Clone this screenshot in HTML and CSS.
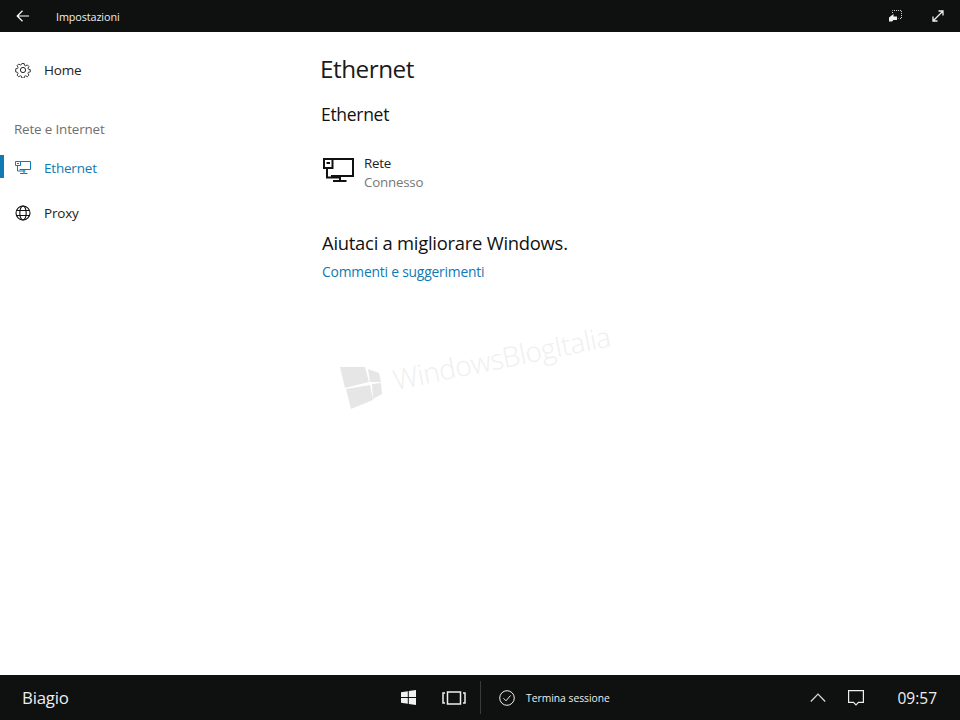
FILE: index.html
```html
<!DOCTYPE html>
<html lang="it">
<head>
<meta charset="utf-8">
<title>Impostazioni</title>
<link rel="stylesheet" href="styles.css">
</head>
<body>
<div class="screen">
  <header class="titlebar">
    <div class="titlebar-left">
      <svg class="back-icon" width="14" height="12" viewBox="0 0 14 12"><path d="M6.500 .8 1.200 6l5.300 5.200M1.200 6H13" fill="none" stroke="#fff" stroke-width="1.200"/></svg>
      <span class="app-title">Impostazioni</span>
    </div>
    <div class="titlebar-right">
      <svg width="13" height="12" viewBox="0 0 13 12"><path d="M3.500 3V.5h9v8h-3" fill="none" stroke="#ccc" stroke-dasharray="1 1"/><path d="M0 11.500V7.500L4.500 4v2.500H8V10H4.500L3 11.500z" fill="#eee"/></svg>
      <svg width="12" height="12" viewBox="0 0 12 12"><path d="M1.500 10.500 10.500 1.500M6.500 1h4.500v4.500M1 6.500V11h4.500" fill="none" stroke="#eee" stroke-width="1.300"/></svg>
    </div>
  </header>

  <main class="main">
    <nav class="sidebar">
      <a class="nav-item home">
        <svg class="nav-icon" width="16" height="16" viewBox="0 0 16 16"><circle cx="8" cy="8" r="2.600" fill="none" stroke="#222" stroke-width="1"/><path d="M6.700 .8h2.600l.4 2 1.300.6 1.800-1.100 1.800 1.800-1.100 1.800.6 1.300 2 .4v2.600l-2 .4-.6 1.300 1.100 1.800-1.800 1.800-1.800-1.100-1.300.6-.4 2H6.700l-.4-2-1.300-.6-1.800 1.100-1.800-1.800 1.100-1.800-.6-1.300-2-.4V6.700l2-.4.600-1.300-1.100-1.800 1.800-1.800 1.800 1.100 1.300-.6z" transform="translate(.8 .8) scale(.9)" fill="none" stroke="#222" stroke-width="1"/></svg>
        <span>Home</span>
      </a>
      <div class="nav-heading">Rete e Internet</div>
      <a class="nav-item active">
        <svg class="nav-icon" width="16" height="13" viewBox="0 0 16 13"><path d="M5.500 .5h10v8H4.500M.5.500h5v4h-5zM2.500 4.500v5.500h8M9 8.500v3.500M5 12.500h7.500M2 2.500h2" fill="none" stroke="#0f7ab3" stroke-width="1"/></svg>
        <span>Ethernet</span>
      </a>
      <a class="nav-item">
        <svg class="nav-icon" width="16" height="16" viewBox="0 0 16 16"><g fill="none" stroke="#111" stroke-width="1.100"><circle cx="8" cy="8" r="7"/><ellipse cx="8" cy="8" rx="3.200" ry="7"/><path d="M1.500 5.500h13M1.500 10.500h13"/></g></svg>
        <span>Proxy</span>
      </a>
    </nav>

    <section class="content">
      <h1 class="page-title">Ethernet</h1>
      <h2 class="section-title">Ethernet</h2>
      <div class="network">
        <svg class="network-icon" width="33" height="25" viewBox="0 0 33 25"><path d="M10 2h21v17H9M2 2h8.500v9H2zM5 11v9.500h13.500M18 19v5M11 24h13.500M4.500 6h3.500" fill="none" stroke="#111" stroke-width="2"/></svg>
        <div class="network-text">
          <div class="network-name">Rete</div>
          <div class="network-status">Connesso</div>
        </div>
      </div>
      <h3 class="help-title">Aiutaci a migliorare Windows.</h3>
      <a class="help-link">Commenti e suggerimenti</a>
    </section>

    <div class="watermark">
      <svg class="watermark-logo" width="42" height="45" viewBox="0 0 42 45"><path d="M0 2H25L29 17 5 23zM28 4 39 8 41 17H30zM6 24 30 20 33 35 11 44zM32 19 41 18 42 29 33 34z" fill="#e6e6e6"/></svg>
      <span class="watermark-text">WindowsBlogItalia</span>
    </div>
  </main>

  <footer class="taskbar">
    <span class="user">Biagio</span>
    <div class="task-center">
      <svg class="win-icon" width="15" height="15" viewBox="0 0 15 15"><path d="M0 2.200 6.800 1.200V7H0zM7.800 1 15 0V7H7.800zM0 8H6.800V13.800L0 12.800zM7.800 8H15V15L7.800 14z" fill="#f2f2f2"/></svg>
      <svg class="view-icon" width="24" height="14" viewBox="0 0 24 14"><path d="M5.500 1h13v12h-13zM3 2H1v10h2M21 2h2v10h-2" fill="none" stroke="#eee" stroke-width="1.500"/></svg>
      <div class="divider"></div>
      <svg class="check-icon" width="16" height="16" viewBox="0 0 16 16"><circle cx="8" cy="8" r="7.300" fill="none" stroke="#eee" stroke-width="1"/><path d="M4.500 8.300 7 10.800 11.500 5.500" fill="none" stroke="#eee" stroke-width="1"/></svg>
      <span class="signout">Termina sessione</span>
    </div>
    <div class="task-right">
      <svg width="16" height="9" viewBox="0 0 16 9"><path d="M.8 8.500 8 1.200l7.200 7.300" fill="none" stroke="#ddd" stroke-width="1.200"/></svg>
      <svg class="notify-icon" width="16" height="16" viewBox="0 0 16 16"><path d="M.6.6h14.800v11.800H10.500L8 15 5.500 12.400H.6z" fill="none" stroke="#eee" stroke-width="1.200"/></svg>
      <span class="clock">09:57</span>
    </div>
  </footer>
</div>
</body>
</html>
```

FILE: styles.css
```css
* { box-sizing: border-box; }
html, body { margin: 0; padding: 0; }
body { font-family: "Open Sans", "Noto Sans", sans-serif; background: #fff; color: #1a1a1a; }
.screen { width: 960px; height: 720px; display: flex; flex-direction: column; overflow: hidden; }

.titlebar { height: 32px; flex: none; background: #0e1110; color: #eee; display: flex; justify-content: space-between; align-items: center; }
.titlebar-left { display: flex; align-items: center; padding-left: 16px; }
.back-icon { margin-right: 26px; }
.app-title { font-size: 10.800px; letter-spacing: -.1px; }
.titlebar-right { display: flex; align-items: center; gap: 30px; padding-right: 16px; }

.main { flex: 1; display: flex; position: relative; }
.sidebar { width: 320px; flex: none; padding-top: 15px; }
.nav-item { height: 45px; display: flex; align-items: center; padding-left: 15px; font-size: 13.500px; color: #222; position: relative; letter-spacing: -.2px; }
.nav-item span { margin-left: 13px; }
.nav-icon { flex: none; width: 16px; }
.nav-heading { margin-top: 27px; margin-bottom: 6px; padding-left: 14px; font-size: 13.400px; line-height: 20px; color: #6f6f6f; letter-spacing: -.15px; }
.nav-item.active { color: #0f7ab3; }
.nav-item.active::before { content: ""; position: absolute; left: 0; top: 10px; width: 4px; height: 23px; background: #0f7ab3; }

.content { flex: 1; padding-top: 19px; }
.page-title { margin: 0; font-size: 24.300px; line-height: 36px; font-weight: 400; color: #1a1a1a; letter-spacing: -.5px; }
.section-title { margin: 14px 0 0 1px; font-size: 17.500px; line-height: 26px; font-weight: 400; color: #111; letter-spacing: -.3px; }
.network { display: flex; margin: 27px 0 0 2px; }
.network-icon { margin-top: 3px; flex: none; }
.network-text { margin-left: 9px; font-size: 13.300px; line-height: 19px; letter-spacing: -.2px; }
.network-name { color: #222; }
.network-status { color: #777; }
.help-title { margin: 38px 0 0 2px; font-size: 18.400px; line-height: 26px; font-weight: 400; color: #111; letter-spacing: -.25px; }
.help-link { display: block; margin: 6px 0 0 2px; font-size: 13.850px; line-height: 20px; color: #0f7ab3; letter-spacing: -.2px; }

.watermark { position: absolute; left: 340px; top: 333px; }
.watermark-logo { display: block; }
.watermark-text { position: absolute; left: 57px; top: -5px; white-space: nowrap; font-size: 28px; line-height: 38px; font-weight: 300; letter-spacing: -.4px; color: #efefef; transform: rotate(-11.500deg); transform-origin: 0 100%; }

.taskbar { height: 45px; flex: none; background: #0e1110; color: #eee; display: flex; align-items: center; position: relative; }
.user { margin-left: 22px; font-size: 16.800px; letter-spacing: -.2px; width: 378px; }
.task-center { display: flex; align-items: center; }
.win-icon { margin-left: 1px; }
.view-icon { margin-left: 26px; }
.divider { width: 1px; height: 33px; background: #3a3c3b; margin: 0 18px 0 14px; }
.signout { margin-left: 11px; font-size: 10.300px; }
.task-right { margin-left: auto; display: flex; align-items: center; padding-right: 23px; }
.notify-icon { margin-left: 22px; }
.clock { margin-left: 33px; font-size: 15.500px; }
```
